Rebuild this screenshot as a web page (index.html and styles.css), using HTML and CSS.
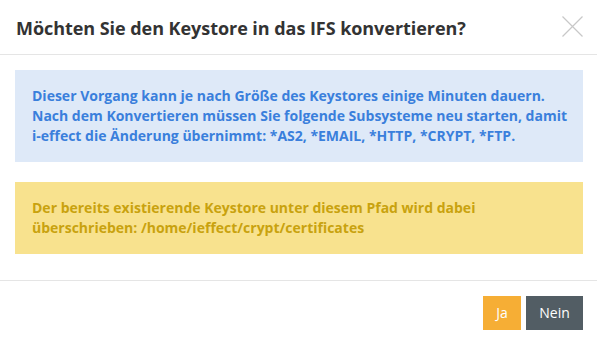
FILE: index.html
```html
<!DOCTYPE html>
<html lang="de">
<head>
<meta charset="utf-8">
<link rel="stylesheet" href="styles.css">
</head>
<body>
<div class="modal">
  <div class="modal-header">
    <h4 class="title">Möchten Sie den Keystore in das IFS konvertieren?</h4>
    <button class="close" aria-label="Schließen">
      <svg width="21" height="21" viewBox="0 0 21 21"><path d="M0.5 0.5 L20.5 20.5 M20.5 0.5 L0.5 20.5" stroke="#c8c8c8" stroke-width="1.2" fill="none"/></svg>
    </button>
  </div>
  <div class="modal-body">
    <div class="alert alert-info">Dieser Vorgang kann je nach Größe des Keystores einige Minuten dauern. Nach dem Konvertieren müssen Sie folgende Subsysteme neu starten, damit i-effect die Änderung übernimmt: *AS2, *EMAIL, *HTTP, *CRYPT, *FTP.</div>
    <div class="alert alert-warning">Der bereits existierende Keystore unter diesem Pfad wird dabei überschrieben: /home/ieffect/crypt/certificates</div>
  </div>
  <div class="modal-footer">
    <button class="btn btn-yes">Ja</button>
    <button class="btn btn-no">Nein</button>
  </div>
</div>
</body>
</html>
```

FILE: styles.css
```css
html, body {
  margin: 0;
  padding: 0;
  background: #fff;
}
body {
  font-family: "Open Sans", "Noto Sans", sans-serif;
  width: 597px;
  height: 345px;
  overflow: hidden;
}
.modal {
  width: 597px;
}
.modal-header {
  height: 55px;
  border-bottom: 1px solid #e5e5e5;
  display: flex;
  align-items: center;
  justify-content: space-between;
  padding: 0 14px 0 16px;
  box-sizing: border-box;
}
.title {
  margin: 0;
  font-size: 18px;
  font-weight: 700;
  color: #333;
  padding-top: 2px;
  letter-spacing: -0.05px;
}
.close {
  border: 0;
  background: none;
  padding: 0;
  width: 21px;
  height: 21px;
  display: flex;
  margin-top: -2px;
}
.modal-body {
  padding: 15px 14px 26px 15px;
  display: flex;
  flex-direction: column;
  gap: 20px;
}
.alert {
  font-size: 14px;
  font-weight: 700;
  line-height: 20px;
  padding: 16px 8px 16px 17px;
}
.alert-info {
  background: #dee9f8;
  color: #3a7fdc;
}
.alert-warning {
  background: #f8e28e;
  color: #c9a20f;
}
.modal-footer {
  border-top: 1px solid #e5e5e5;
  display: flex;
  justify-content: flex-end;
  gap: 5px;
  padding: 15px 14px 0 15px;
}
.btn {
  border: 0;
  font-family: "Open Sans", "Noto Sans", sans-serif;
  font-size: 14px;
  color: #fff;
  height: 34px;
  line-height: 34px;
}
.btn-yes {
  background: #f6ae35;
  width: 38px;
  padding: 0;
}
.btn-no {
  background: #525d64;
  width: 57px;
  padding: 0;
}
```
